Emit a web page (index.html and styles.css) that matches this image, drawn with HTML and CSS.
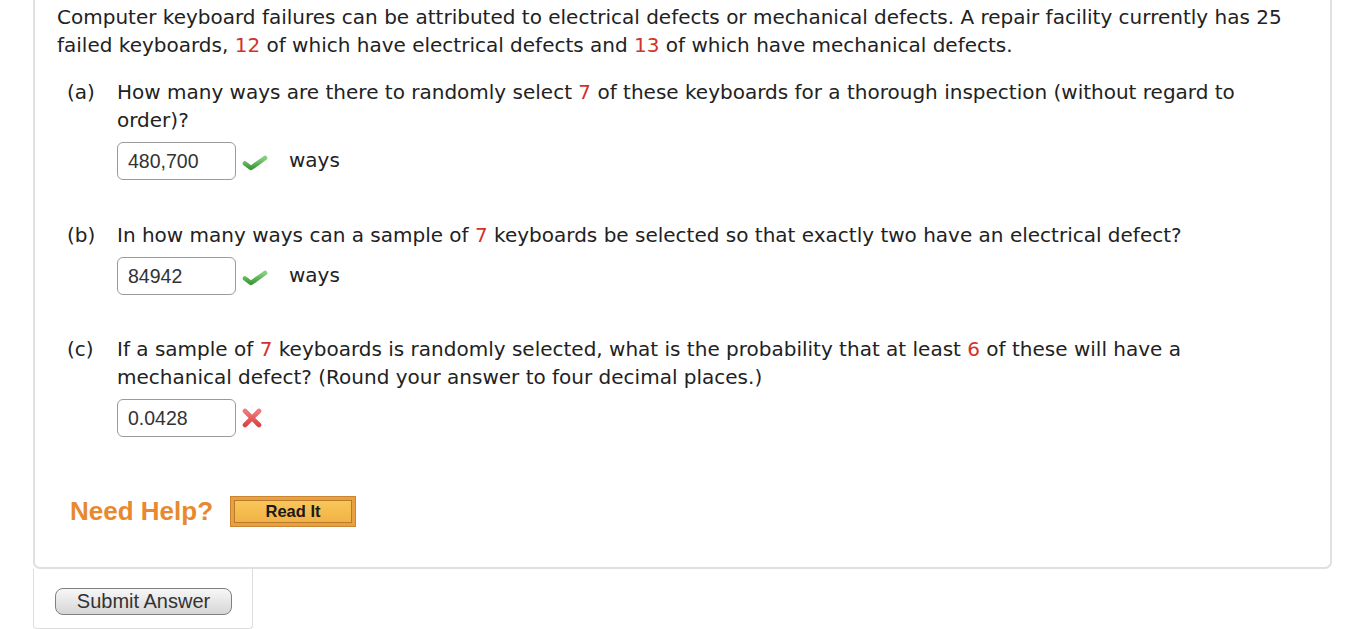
FILE: index.html
```html
<!DOCTYPE html>
<html>
<head>
<meta charset="utf-8">
<link rel="stylesheet" href="styles.css">
</head>
<body>
<div class="page">
  <div class="question">
    <p class="stem">Computer keyboard failures can be attributed to electrical defects or mechanical defects. A repair facility currently has 25 failed keyboards, <span class="red">12</span> of which have electrical defects and <span class="red">13</span> of which have mechanical defects.</p>

    <div class="part part-a">
      <span class="label">(a)</span>
      <div class="body">
        <p class="text">How many ways are there to randomly select <span class="red">7</span> of these keyboards for a thorough inspection (without regard to order)?</p>
        <div class="answer">
          <span class="box">480,700</span>
          <svg class="mark check" width="26" height="16" viewBox="0 0 26 16"><defs><linearGradient id="g1" x1="0" y1="0" x2="0" y2="1"><stop offset="0" stop-color="#86cf7f"/><stop offset="1" stop-color="#3f9a3a"/></linearGradient></defs><polyline points="3,8.5 9,13 23,3" fill="none" stroke="url(#g1)" stroke-width="4.6" stroke-linejoin="round" stroke-linecap="round"/></svg>
          <span class="unit">ways</span>
        </div>
      </div>
    </div>

    <div class="part part-b">
      <span class="label">(b)</span>
      <div class="body">
        <p class="text">In how many ways can a sample of <span class="red">7</span> keyboards be selected so that exactly two have an electrical defect?</p>
        <div class="answer">
          <span class="box">84942</span>
          <svg class="mark check" width="26" height="16" viewBox="0 0 26 16"><defs><linearGradient id="g2" x1="0" y1="0" x2="0" y2="1"><stop offset="0" stop-color="#86cf7f"/><stop offset="1" stop-color="#3f9a3a"/></linearGradient></defs><polyline points="3,8.5 9,13 23,3" fill="none" stroke="url(#g2)" stroke-width="4.6" stroke-linejoin="round" stroke-linecap="round"/></svg>
          <span class="unit">ways</span>
        </div>
      </div>
    </div>

    <div class="part part-c">
      <span class="label">(c)</span>
      <div class="body">
        <p class="text">If a sample of <span class="red">7</span> keyboards is randomly selected, what is the probability that at least <span class="red">6</span> of these will have a mechanical defect? (Round your answer to four decimal places.)</p>
        <div class="answer">
          <span class="box">0.0428</span>
          <svg class="mark cross" width="22" height="20" viewBox="0 0 22 20"><defs><linearGradient id="g3" x1="0" y1="0" x2="0" y2="1"><stop offset="0" stop-color="#f07a7a"/><stop offset="1" stop-color="#d94545"/></linearGradient></defs><path d="M4 3 L18 17 M18 3 L4 17" fill="none" stroke="url(#g3)" stroke-width="4.6" stroke-linecap="round"/></svg>
        </div>
      </div>
    </div>

    <div class="help">
      <span class="need">Need Help?</span>
      <span class="readit"><span class="readit-inner">Read It</span></span>
    </div>
  </div>
  <div class="submit-box">
    <span class="submit">Submit Answer</span>
  </div>
</div>
</body>
</html>
```

FILE: styles.css
```css
html, body {
  margin: 0;
  padding: 0;
  background: #ffffff;
}

.page {
  padding-left: 33px;
  width: 1299px;
}

.question {
  border: 2px solid #e0e0e0;
  border-top: none;
  border-radius: 0 0 7px 7px;
  padding: 3px 36px 40px 22px;
  font-family: "DejaVu Sans", Verdana, sans-serif;
  font-size: 20px;
  line-height: 28px;
  color: #222222;
}

.stem {
  margin: 0;
}

.red {
  color: #d3322c;
}

.part {
  display: flex;
  padding-left: 10px;
}

.part-a {
  margin-top: 19px;
}

.part-b {
  margin-top: 41px;
}

.part-c {
  margin-top: 40px;
}

.label {
  width: 50px;
  flex: none;
}

.body {
  flex: 1;
}

.text {
  margin: 0;
}

.answer {
  display: flex;
  align-items: center;
  margin-top: 8px;
  height: 38px;
}

.box {
  box-sizing: border-box;
  width: 119px;
  height: 38px;
  border: 1px solid #9a9a9a;
  border-radius: 6px;
  padding-left: 10px;
  font-family: "Liberation Sans", Arial, sans-serif;
  font-size: 19.5px;
  line-height: 36px;
  color: #333333;
}

.mark {
  display: block;
  margin-left: 6px;
}

.check {
  margin-top: 3px;
}

.cross {
  margin-left: 5px;
}

.unit {
  margin-left: 21px;
  margin-top: -2px;
}

.help {
  display: flex;
  align-items: center;
  margin-top: 58px;
  padding-left: 13px;
  height: 32px;
}

.need {
  font-family: "Liberation Sans", Arial, sans-serif;
  font-weight: bold;
  font-size: 26px;
  color: #e8892f;
  line-height: 32px;
}

.readit {
  display: block;
  box-sizing: border-box;
  margin-left: 17px;
  width: 126px;
  height: 31px;
  padding: 3px;
  background: #eaa041;
  border: 1px solid #c98532;
}

.readit-inner {
  display: block;
  box-sizing: border-box;
  height: 23px;
  border: 1px solid #b97a2c;
  background: linear-gradient(#f8c65a, #f2b245);
  text-align: center;
  font-family: "Liberation Sans", Arial, sans-serif;
  font-weight: bold;
  font-size: 16.5px;
  line-height: 21px;
  color: #1a1a1a;
}

.submit-box {
  box-sizing: border-box;
  width: 220px;
  height: 60px;
  border: 1px solid #dddddd;
  border-top: none;
  border-radius: 0 0 4px 4px;
  padding: 19px 0 0 21px;
}

.submit {
  display: block;
  box-sizing: border-box;
  width: 177px;
  height: 27px;
  border: 1px solid #808080;
  border-radius: 8px;
  background: linear-gradient(#f7f7f7, #d6d6d6);
  text-align: center;
  font-family: "Liberation Sans", Arial, sans-serif;
  font-size: 20px;
  line-height: 25px;
  color: #333333;
}
```
